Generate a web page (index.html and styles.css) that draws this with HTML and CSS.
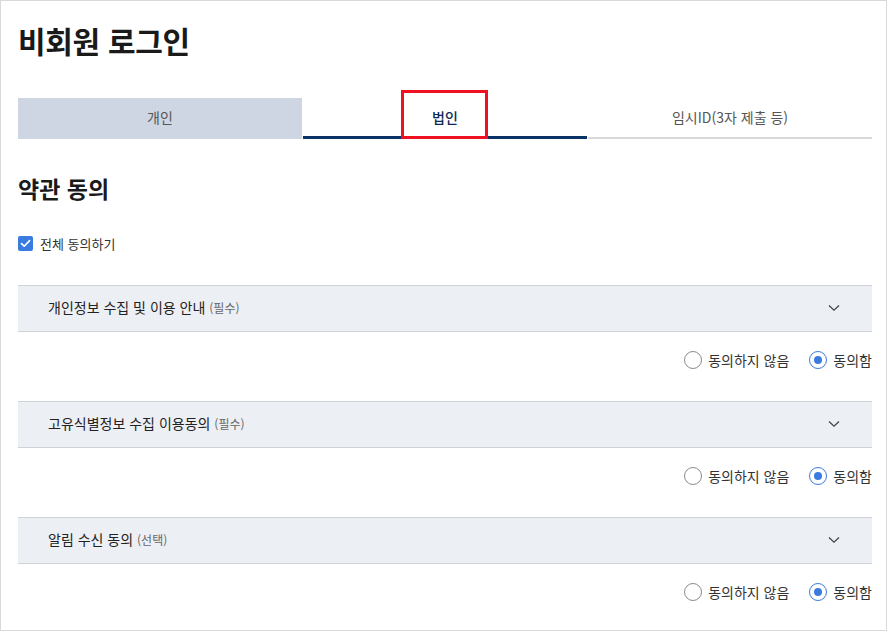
FILE: index.html
```html
<!DOCTYPE html>
<html lang="ko">
<head>
<meta charset="utf-8">
<link rel="stylesheet" href="styles.css">
</head>
<body>
<div class="page">
  <h1 class="title">비회원 로그인</h1>
  <div class="tabs">
    <div class="tab tab-off">개인</div>
    <div class="tab tab-on">법인<span class="mark"></span></div>
    <div class="tab tab-plain">임시ID(3자 제출 등)</div>
  </div>
  <h2 class="section">약관 동의</h2>
  <label class="all">
    <span class="check"><svg width="11" height="9" viewBox="0 0 11 9"><path d="M1.5 4.6 L4.2 7.2 L9.6 1.6" fill="none" stroke="#fff" stroke-width="1.6" stroke-linecap="round" stroke-linejoin="round"/></svg></span>
    전체 동의하기
  </label>

  <div class="item">
    <div class="head"><span class="htxt">개인정보 수집 및 이용 안내 <small>(필수)</small></span><svg class="chev" width="12" height="8" viewBox="0 0 12 8"><path d="M1 1.5 L6 6.2 L11 1.5" fill="none" stroke="#444" stroke-width="1.3"/></svg></div>
    <div class="radios">
      <span class="opt"><span class="radio"></span>동의하지 않음</span>
      <span class="opt"><span class="radio on"></span>동의함</span>
    </div>
  </div>

  <div class="item">
    <div class="head"><span class="htxt">고유식별정보 수집 이용동의 <small>(필수)</small></span><svg class="chev" width="12" height="8" viewBox="0 0 12 8"><path d="M1 1.5 L6 6.2 L11 1.5" fill="none" stroke="#444" stroke-width="1.3"/></svg></div>
    <div class="radios">
      <span class="opt"><span class="radio"></span>동의하지 않음</span>
      <span class="opt"><span class="radio on"></span>동의함</span>
    </div>
  </div>

  <div class="item">
    <div class="head"><span class="htxt">알림 수신 동의 <small>(선택)</small></span><svg class="chev" width="12" height="8" viewBox="0 0 12 8"><path d="M1 1.5 L6 6.2 L11 1.5" fill="none" stroke="#444" stroke-width="1.3"/></svg></div>
    <div class="radios">
      <span class="opt"><span class="radio"></span>동의하지 않음</span>
      <span class="opt"><span class="radio on"></span>동의함</span>
    </div>
  </div>
</div>
</body>
</html>
```
FILE: styles.css
```css
* { box-sizing: border-box; }
html, body { margin: 0; padding: 0; background: #fff; }
body {
  font-family: "Noto Sans CJK KR", "Noto Sans", sans-serif;
  color: #222;
}
.page {
  width: 887px;
  height: 631px;
  border: 1px solid #d9d9d9;
  padding: 0 14px 0 17px;
  overflow: hidden;
}
.title {
  margin: 0;
  padding-top: 18px;
  font-size: 30px;
  line-height: 42px;
  font-weight: 700;
  color: #1a1a1a;
  letter-spacing: -0.3px;
}
.tabs {
  display: flex;
  margin-top: 37px;
  height: 41px;
}
.tab {
  flex: 1;
  display: flex;
  align-items: center;
  justify-content: center;
  font-size: 14px;
  position: relative;
  padding-bottom: 3px;
}
.tab-off { background: #cdd6e2; color: #555; }
.tab-on {
  margin-left: 1px;
  border-bottom: 3px solid #0b3266;
  color: #0b2a55;
  font-weight: 500;
  padding-bottom: 0;
}
.tab-plain {
  margin-left: 1px;
  border-bottom: 2px solid #d9d9d9;
  color: #555;
  padding-bottom: 1px;
}
.mark {
  position: absolute;
  left: 98px;
  top: -8px;
  width: 87px;
  height: 49px;
  border: 3px solid #ee1122;
}
.section {
  margin: 0;
  margin-top: 32px;
  font-size: 23px;
  line-height: 34px;
  font-weight: 700;
  color: #1a1a1a;
}
.all {
  display: flex;
  align-items: center;
  margin-top: 29px;
  font-size: 13px;
  color: #333;
  gap: 7px;
}
.check {
  width: 15px;
  height: 15px;
  border-radius: 2px;
  background: #3a7be0;
  display: flex;
  align-items: center;
  justify-content: center;
}
.item { margin-top: 32px; }
.item + .item { margin-top: 0; }
.head {
  height: 47px;
  background: #eceff4;
  border-top: 1px solid #cfd2d6;
  border-bottom: 1px solid #cfd2d6;
  display: flex;
  align-items: center;
  justify-content: space-between;
  padding: 0 32px 3px 30px;
}
.chev { margin-top: 2px; }
.htxt { font-size: 14px; color: #222; }
.htxt small { font-size: 12px; color: #666; }
.radios {
  height: 69px;
  display: flex;
  justify-content: flex-end;
  gap: 20px;
  padding-top: 18px;
}
.opt {
  display: flex;
  align-items: center;
  gap: 6px;
  font-size: 14px;
  color: #333;
  height: 20px;
}
.radio {
  width: 18px;
  height: 18px;
  border-radius: 50%;
  border: 1px solid #8a8a8a;
  background: #fff;
  position: relative;
}
.radio.on { border-color: #3a7be0; }
.radio.on::after {
  content: "";
  position: absolute;
  left: 4px;
  top: 4px;
  width: 8px;
  height: 8px;
  border-radius: 50%;
  background: #3a7be0;
}
```
